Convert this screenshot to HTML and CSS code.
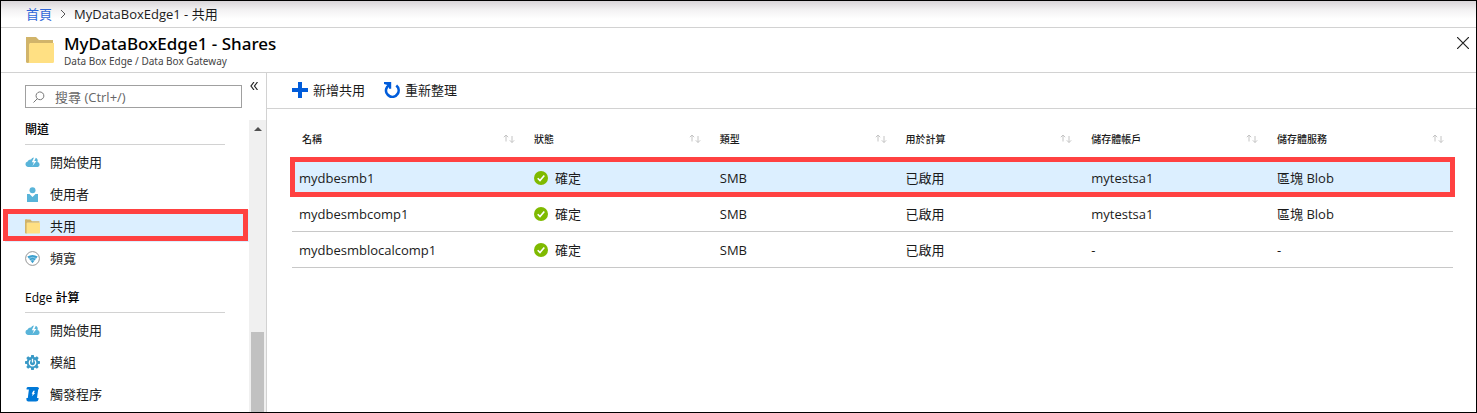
FILE: index.html
```html
<!DOCTYPE html>
<html lang="zh-Hant">
<head>
<meta charset="utf-8">
<meta name="viewport" content="width=device-width, initial-scale=1">
<title>MyDataBoxEdge1 - Shares</title>
<link rel="stylesheet" href="styles.css">
</head>
<body>
<svg class="sprite" aria-hidden="true">
  <symbol id="folder" viewBox="0 0 28 26"><path fill="#d1b46a" d="M1 0h9l3 3h14v3H1z"/><path fill="#d1b46a" d="M0 0h4v26H1.500Q0 26 0 24.500z"/><path fill="#ffe083" d="M3 7.500Q3 6 4.500 6H28v18.500Q28 26 26.500 26H1.500Q3 26 3 24.500z"/></symbol>
  <symbol id="cloud" viewBox="0 0 15 15"><path fill="#59b4d9" d="M2.800 12A2.800 2.800 0 0 1 2.600 6.500 3.300 3.300 0 0 1 6 4.500 3.800 3.800 0 0 1 9 2.500L6.800 7.200h2.100L7.500 11l3.900-5H9.300l1.500-3.300a3.700 3.700 0 0 1 1.700 4.400A2.500 2.500 0 0 1 12.700 12z"/></symbol>
  <symbol id="user" viewBox="0 0 15 15"><circle cx="7.500" cy="3.200" r="3" fill="#59b4d9"/><path fill="#59b4d9" d="M2 7h2.500L7.500 10l3-3H13v8H2z"/></symbol>
  <symbol id="wifi" viewBox="0 0 15 15"><circle cx="7.500" cy="7.500" r="6.900" fill="#fff" stroke="#8a8a8a" stroke-width=".9"/><path d="M2.300 5.500Q7.500 2.300 12.700 5.500L7.500 12.300z" fill="#3a9fce"/><path d="M3.400 7.600Q7.500 5 11.600 7.600M5 9.700Q7.500 8 10 9.700" fill="none" stroke="#cfe8f4" stroke-width=".6"/></symbol>
  <symbol id="gear" viewBox="0 0 15 15"><g fill="#3999c6"><circle cx="7.500" cy="7.500" r="5.700"/><path id="teeth" d="M6.200 0h2.600l.5 3H5.700zM6.200 15h2.600l.5-3H5.700zM0 6.200v2.600l3 .5V5.700zM15 6.200v2.600l-3 .5V5.700z"/><use href="#teeth" transform="rotate(45 7.500 7.500)"/></g><path d="M5.400 5.200A3.200 3.200 0 1 0 9.600 5.200M7.500 3.800v3.600" fill="none" stroke="#fff" stroke-width="1.300"/></symbol>
  <symbol id="trigger" viewBox="0 0 15 15"><path fill="#0078d7" d="M2.600 0H12.500Q14.400.2 14 2.200h-.8L12 11h1.500v1.200Q13.300 14.500 11 14.500H3Q1.200 14.300 1.400 12.300V11h1.400L3.900 2.400H1.600Q1 .6 2.600 0z"/><path fill="#fff" d="M8.300 3.800h1.500L9 5.900h1.200L6.900 9.300l.8-2.500H6.700z"/></symbol>
  <symbol id="check" viewBox="0 0 14 14"><circle cx="7" cy="7" r="7" fill="#7fba00"/><path d="M3.700 7.200l2.300 2.400 4.300-5" fill="none" stroke="#fff" stroke-width="1.600"/></symbol>
  <symbol id="sort" viewBox="0 0 12 10"><path d="M3 7.500V1M.8 3.200L3 1l2.200 2.200M9 2v6.500M6.800 6.300L9 8.500l2.200-2.200" fill="none" stroke="#c4c4c4" stroke-width="1"/></symbol>
</svg>

<nav class="breadcrumb" aria-label="Breadcrumb">
  <a href="#">首頁</a>
  <svg class="chevron" viewBox="0 0 6 8"><path d="M1 0l4 4-4 4" fill="none" stroke="#555"/></svg>
  <span>MyDataBoxEdge1 - 共用</span>
</nav>

<header class="header">
  <svg class="header-icon"><use href="#folder"/></svg>
  <div class="header-text">
    <h1 class="title">MyDataBoxEdge1 - Shares</h1>
    <p class="subtitle">Data Box Edge / Data Box Gateway</p>
  </div>
  <button class="close" type="button" aria-label="關閉"><svg viewBox="0 0 12 12"><path d="M0 0l12 12M12 0L0 12" stroke="#222" stroke-width="1.200"/></svg></button>
</header>

<div class="body">
  <aside class="sidebar">
    <div class="search-row">
      <label class="search">
        <svg viewBox="0 0 12 12"><path d="M.5 11.500l4-4M4.300 7.700A3.900 3.900 0 1 1 7.500 8.700Q5.500 8.800 4.300 7.700z" fill="none" stroke="#777"/></svg>
        <input type="text" placeholder="搜尋 (Ctrl+/)" aria-label="搜尋">
      </label>
      <button class="collapse" type="button" aria-label="摺疊"><svg viewBox="0 0 8 8"><path d="M4 0L1 4l3 4M7.500 0l-3 4 3 4" fill="none" stroke="#222" stroke-width="1.200"/></svg></button>
    </div>
    <div class="menu-wrap">
      <nav class="menu">
        <h2 class="group">閘道</h2>
        <a class="item" href="#"><svg><use href="#cloud"/></svg>開始使用</a>
        <a class="item" href="#"><svg><use href="#user"/></svg>使用者</a>
        <a class="item selected" href="#"><svg><use href="#folder"/></svg>共用</a>
        <a class="item" href="#"><svg><use href="#wifi"/></svg>頻寬</a>
        <h2 class="group">Edge 計算</h2>
        <a class="item" href="#"><svg><use href="#cloud"/></svg>開始使用</a>
        <a class="item" href="#"><svg><use href="#gear"/></svg>模組</a>
        <a class="item" href="#"><svg><use href="#trigger"/></svg>觸發程序</a>
      </nav>
      <div class="scrollbar">
        <svg class="scroll-up" viewBox="0 0 8 4"><path d="M0 4l4-4 4 4z" fill="#505050"/></svg>
        <div class="thumb"></div>
      </div>
    </div>
  </aside>

  <main class="main">
    <div class="toolbar">
      <button class="command" type="button"><svg viewBox="0 0 16 16"><path d="M8 0v16M0 8h16" stroke="#015cda" stroke-width="4"/></svg>新增共用</button>
      <button class="command" type="button"><svg viewBox="0 0 16 16"><path d="M12.300 3.600A6.300 6.300 0 1 1 2.300 6.600Q3 4.500 5.500 2.800" fill="none" stroke="#015cda" stroke-width="2.600"/><path d="M0 0h7.200v6.800H5V3.600L0 2z" fill="#015cda"/></svg>重新整理</button>
    </div>
    <div class="content">
      <table class="grid">
        <thead>
          <tr>
            <th scope="col"><div class="head">名稱<svg><use href="#sort"/></svg></div></th>
            <th scope="col"><div class="head">狀態<svg><use href="#sort"/></svg></div></th>
            <th scope="col"><div class="head">類型<svg><use href="#sort"/></svg></div></th>
            <th scope="col"><div class="head">用於計算<svg><use href="#sort"/></svg></div></th>
            <th scope="col"><div class="head">儲存體帳戶<svg><use href="#sort"/></svg></div></th>
            <th scope="col"><div class="head">儲存體服務<svg><use href="#sort"/></svg></div></th>
          </tr>
        </thead>
        <tbody>
          <tr class="active"><td>mydbesmb1</td><td><div class="status"><svg><use href="#check"/></svg>確定</div></td><td>SMB</td><td>已啟用</td><td>mytestsa1</td><td>區塊 Blob</td></tr>
          <tr><td>mydbesmbcomp1</td><td><div class="status"><svg><use href="#check"/></svg>確定</div></td><td>SMB</td><td>已啟用</td><td>mytestsa1</td><td>區塊 Blob</td></tr>
          <tr><td>mydbesmblocalcomp1</td><td><div class="status"><svg><use href="#check"/></svg>確定</div></td><td>SMB</td><td>已啟用</td><td>-</td><td>-</td></tr>
        </tbody>
      </table>
    </div>
  </main>
</div>
</body>
</html>
```
FILE: styles.css
```css
* { box-sizing: border-box; }

body {
  display: flex;
  flex-direction: column;
  height: 100vh;
  margin: 0;
  overflow: hidden;
  border: 1px solid #000;
  background: #fff;
  color: #1b1b1b;
  font: 13px/18px "Open Sans", "Noto Sans CJK TC", sans-serif;
}

a { text-decoration: none; }

button {
  padding: 0;
  border: 0;
  background: none;
  color: inherit;
  font: inherit;
}

svg { display: block; flex: none; }

.sprite { position: absolute; width: 0; height: 0; }

.breadcrumb {
  display: flex;
  align-items: center;
  gap: 8px;
  flex: none;
  height: 27px;
  padding-left: 25px;
  border-bottom: 1px solid #d2d2d2;
  background: linear-gradient(#d9d5d9, #f3f2f3 9px, #fff 18px);
}

.breadcrumb a { color: #2f66d8; }

.chevron { width: 6px; height: 8px; }

.header {
  display: flex;
  align-items: center;
  gap: 10px;
  flex: none;
  height: 45px;
  padding: 0 7px 0 25px;
  border-bottom: 1px solid #d2d2d2;
}

.header-icon { width: 28px; height: 26px; }

.header-text { flex: 1; font-family: "Noto Sans", "Noto Sans CJK TC", sans-serif; }

.title {
  margin: 0;
  color: #000;
  font-size: 17px;
  font-weight: 500;
  line-height: 21px;
}

.subtitle {
  margin: 0;
  color: #444;
  font-size: 10px;
  line-height: 14px;
}

.close { align-self: flex-start; padding: 9px 0; }
.close svg { width: 12px; height: 12px; }

.body { display: flex; flex: 1; min-height: 0; }

.sidebar {
  display: flex;
  flex-direction: column;
  flex: none;
  width: 266px;
  border-right: 1px solid #d2d2d2;
}

.search-row {
  display: flex;
  gap: 8px;
  flex: none;
  height: 47px;
  padding: 12px 0 0 24px;
}

.search {
  display: flex;
  align-items: center;
  gap: 10px;
  width: 217px;
  height: 23px;
  padding-left: 7px;
  border: 1px solid #a0a0a0;
}

.search svg { width: 12px; height: 12px; }

.search input {
  flex: 1;
  min-width: 0;
  padding: 0;
  border: 0;
  outline: 0;
  background: none;
  font: inherit;
}

.search input::placeholder { color: #666; opacity: 1; }

.collapse { align-self: flex-start; margin-top: -3px; }
.collapse svg { width: 8px; height: 8px; }

.menu-wrap { display: flex; flex: 1; min-height: 0; }

.menu { flex: 1; overflow: hidden; }

.group {
  height: 25px;
  margin: 0 24px 1px;
  border-bottom: 1px solid #d2d2d2;
  color: #000;
  font-size: 12px;
  font-weight: 500;
  line-height: 20px;
}

.item + .group { margin-top: 14px; }

.item {
  position: relative;
  display: flex;
  align-items: center;
  gap: 10px;
  height: 32px;
  padding-left: 24px;
  color: #1b1b1b;
}

.item svg { width: 15px; height: 15px; }

.selected { background: linear-gradient(#dcefff, #dcefff) 4px 0 no-repeat; }

.selected::after {
  position: absolute;
  inset: -1px 1px 1px 2px;
  border: 5px solid #ff4141;
  content: "";
}

.scrollbar {
  display: flex;
  flex-direction: column;
  justify-content: space-between;
  align-items: center;
  flex: none;
  width: 17px;
  padding-top: 7px;
  background: #f0f0f0;
}

.scroll-up { width: 8px; height: 4px; }

.thumb { width: 13px; height: 28%; background: #c1c1c1; }

.main { flex: 1; min-width: 0; }

.toolbar {
  display: flex;
  align-items: center;
  gap: 19px;
  height: 36px;
  padding: 0 25px 1px;
  border-bottom: 1px solid #d2d2d2;
}

.command { display: flex; align-items: center; gap: 5px; }
.command svg { width: 16px; height: 16px; }

.content { padding: 0 23px 0 25px; }

.grid {
  width: 100%;
  border-spacing: 0;
  table-layout: fixed;
}

.grid th {
  width: 16%;
  height: 51px;
  padding: 8px 12px 0 7px;
  font-size: 10px;
  font-weight: 500;
}

.grid th:first-child { width: auto; padding-left: 10px; }
.grid th:last-child { width: 183px; padding-right: 9px; }

.head { display: flex; justify-content: space-between; align-items: center; }
.head svg { width: 12px; height: 10px; }

.grid td {
  height: 36px;
  padding: 0 7px;
  border-bottom: 1px solid #c8c8c8;
}

.active { position: relative; background: #dcefff; }

.active td:first-child::after {
  position: absolute;
  inset: -3px -2px -1px;
  border: 5px solid #ff4141;
  content: "";
}

.status { display: flex; align-items: center; gap: 7px; }
.status svg { width: 14px; height: 14px; }
```
